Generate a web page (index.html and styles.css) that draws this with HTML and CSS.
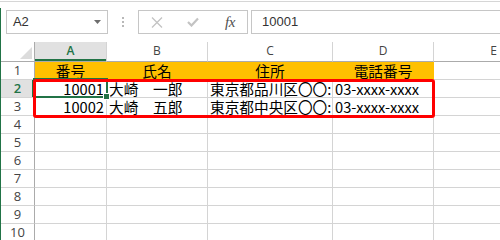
FILE: index.html
```html
<!DOCTYPE html>
<html lang="ja">
<head>
<meta charset="utf-8">
<title>Excel</title>
<link rel="stylesheet" href="styles.css">
</head>
<body>
<div class="app">
  <div class="topline"></div>
  <div class="fbar">
    <div class="namebox">
      <span class="nb-text">A2</span>
      <svg class="nb-arrow" width="7" height="4" viewBox="0 0 7 4"><polygon points="0,0 7,0 3.5,4" fill="#6d6d6d"/></svg>
    </div>
    <div class="grip"><i></i><i></i><i></i></div>
    <div class="btnbox">
      <svg class="ico" width="12" height="11" viewBox="0 0 12 11"><path d="M1 0.5 L11 10.5 M11 0.5 L1 10.5" stroke="#c3c3c3" stroke-width="1.3" fill="none"/></svg>
      <svg class="ico" width="12" height="10" viewBox="0 0 12 10"><path d="M1 5 L4.5 8.5 L11 1.5" stroke="#c3c3c3" stroke-width="2.2" fill="none"/></svg>
      <span class="fx">fx</span>
    </div>
    <div class="formula">10001</div>
  </div>
  <div class="sheet">
    <div class="corner"><svg width="12" height="12" viewBox="0 0 12 12"><polygon points="12,0 12,12 0,12" fill="#dcdcdc"/></svg></div>
    <div class="ch sel">A</div>
    <div class="ch">B</div>
    <div class="ch">C</div>
    <div class="ch">D</div>
    <div class="ch">E</div>

    <div class="rh">1</div>
    <div class="c y ctr">番号</div>
    <div class="c y ctr">氏名</div>
    <div class="c y ctr">住所</div>
    <div class="c y ctr">電話番号</div>
    <div class="c"></div>

    <div class="rh rsel">2</div>
    <div class="c num active">10001</div>
    <div class="c">大崎　一郎</div>
    <div class="c clip">東京都品川区〇〇:</div>
    <div class="c">03-xxxx-xxxx</div>
    <div class="c"></div>

    <div class="rh">3</div>
    <div class="c num">10002</div>
    <div class="c">大崎　五郎</div>
    <div class="c clip">東京都中央区〇〇:</div>
    <div class="c">03-xxxx-xxxx</div>
    <div class="c"></div>

    <div class="rh">4</div>
    <div class="c"></div>
    <div class="c"></div>
    <div class="c"></div>
    <div class="c"></div>
    <div class="c"></div>

    <div class="rh">5</div>
    <div class="c"></div>
    <div class="c"></div>
    <div class="c"></div>
    <div class="c"></div>
    <div class="c"></div>

    <div class="rh">6</div>
    <div class="c"></div>
    <div class="c"></div>
    <div class="c"></div>
    <div class="c"></div>
    <div class="c"></div>

    <div class="rh">7</div>
    <div class="c"></div>
    <div class="c"></div>
    <div class="c"></div>
    <div class="c"></div>
    <div class="c"></div>

    <div class="rh">8</div>
    <div class="c"></div>
    <div class="c"></div>
    <div class="c"></div>
    <div class="c"></div>
    <div class="c"></div>

    <div class="rh">9</div>
    <div class="c"></div>
    <div class="c"></div>
    <div class="c"></div>
    <div class="c"></div>
    <div class="c"></div>

    <div class="rh">10</div>
    <div class="c"></div>
    <div class="c"></div>
    <div class="c"></div>
    <div class="c"></div>
    <div class="c"></div>
  </div>
  <div class="redbox"></div>
</div>
</body>
</html>
```
FILE: styles.css
```css
html, body {
  margin: 0;
  padding: 0;
  background: #ffffff;
}
body {
  width: 500px;
  overflow: hidden;
}
.app {
  position: relative;
  width: 500px;
  padding-top: 1px;
  box-sizing: border-box;
  overflow: hidden;
}
.app::before {
  content: "";
  position: absolute;
  left: 0;
  top: 8px;
  bottom: 0;
  width: 1px;
  background: #217346;
  z-index: 3;
}
.topline {
  height: 1px;
  background: #d6d6d6;
}
.fbar {
  display: flex;
  align-items: stretch;
  height: 24px;
  margin-top: 8px;
  width: 620px;
}
.namebox {
  box-sizing: border-box;
  width: 102px;
  margin-left: 6px;
  border: 1px solid #c6c6c6;
  display: flex;
  align-items: center;
  justify-content: space-between;
  padding: 0 6px 1px 6px;
  font-family: "Liberation Sans", Arial, sans-serif;
  font-size: 13px;
  color: #333;
}
.nb-text { letter-spacing: -0.2px; }
.nb-arrow { margin-top: 1px; }
.grip {
  width: 30px;
  display: flex;
  flex-direction: column;
  align-items: center;
  justify-content: center;
  gap: 2px;
}
.grip i {
  display: block;
  width: 2px;
  height: 2px;
  background: #b8b8b8;
}
.btnbox {
  box-sizing: border-box;
  width: 110px;
  border: 1px solid #c6c6c6;
  display: flex;
  align-items: center;
  padding: 0 0 0 12px;
  gap: 24px;
}
.fx {
  font-family: "Liberation Serif", "Times New Roman", serif;
  font-style: italic;
  font-size: 15px;
  color: #505050;
  margin-left: 2px;
  letter-spacing: -0.5px;
}
.formula {
  box-sizing: border-box;
  flex: 1;
  margin-left: 3px;
  border: 1px solid #c6c6c6;
  padding: 0 0 1px 10px;
  display: flex;
  align-items: center;
  font-family: "Liberation Sans", Arial, sans-serif;
  font-size: 13px;
  color: #333;
}
.sheet {
  margin-top: 8px;
  margin-left: 1px;
  display: grid;
  grid-template-columns: 34px 72px 101px 125px 101px 120px;
  grid-template-rows: 20px repeat(10, 18px);
}
.sheet > div {
  box-sizing: border-box;
  border-right: 1px solid #d4d4d4;
  border-bottom: 1px solid #d4d4d4;
  min-width: 0;
}
.corner {
  display: flex;
  align-items: flex-end;
  justify-content: flex-end;
  padding: 0 2px 2px 0;
  border-bottom-color: #ababab !important;
  border-right-color: #ababab !important;
}
.ch {
  display: flex;
  align-items: center;
  justify-content: center;
  font-family: "Open Sans", "Liberation Sans", sans-serif;
  font-size: 12px;
  line-height: 14px;
  color: #444;
  border-bottom-color: #ababab !important;
  padding-bottom: 1px;
}
.ch.sel {
  background: #e1e1e1;
  color: #217346;
  font-weight: 600;
  box-shadow: inset 0 -2px 0 #217346;
}
.rh {
  display: flex;
  align-items: center;
  justify-content: center;
  font-family: "Open Sans", "Liberation Sans", sans-serif;
  font-size: 13px;
  line-height: 15px;
  color: #444;
  border-right-color: #ababab !important;
}
.rh.rsel {
  background: #e1e1e1;
  color: #217346;
  font-weight: 600;
  box-shadow: inset -2px 0 0 #217346;
}
.c {
  font-family: "Noto Sans CJK JP", "Noto Sans CJK SC", sans-serif;
  font-size: 14.67px;
  line-height: 17px;
  color: #000;
  padding: 0 2px;
  white-space: nowrap;
}
.c.clip {
  overflow-x: clip;
  overflow-y: visible;
}
.c.y {
  background: #ffc000;
  border-right-color: #ffc000 !important;
}
.c.ctr { text-align: center; }
.c.num { text-align: right; }
.c.active {
  position: relative;
}
.c.active::after {
  content: "";
  position: absolute;
  left: -2px;
  top: -2px;
  right: -2px;
  bottom: -1px;
  border: 2px solid #217346;
}
.c.active::before {
  content: "";
  position: absolute;
  right: -4px;
  bottom: -3px;
  width: 5px;
  height: 5px;
  background: #217346;
  border: 1px solid #ffffff;
  z-index: 1;
}
.redbox {
  position: absolute;
  left: 33px;
  top: 79px;
  width: 402px;
  height: 39px;
  box-sizing: border-box;
  border: 3px solid #ff0000;
  border-radius: 3px;
  z-index: 2;
}
```
